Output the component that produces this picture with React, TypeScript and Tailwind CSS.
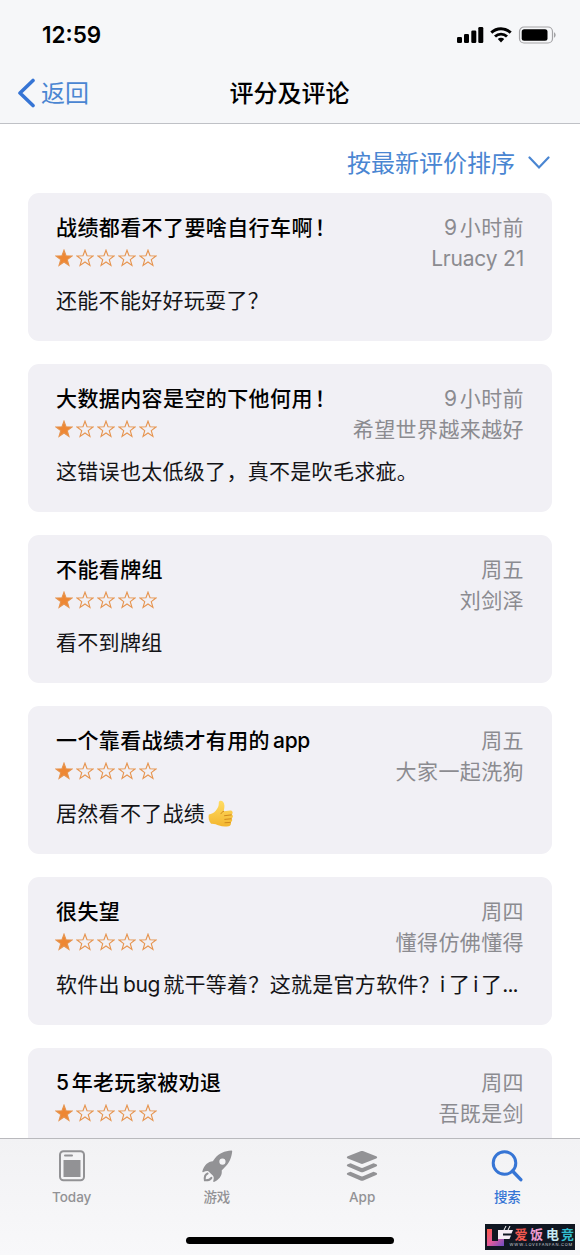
import type { ReactNode } from "react";

interface Review {
  id: number;
  title: string;
  time: string;
  author: string;
  body: string;
  thumb?: boolean;
}

const reviews: Review[] = [
  { id: 1, title: "战绩都看不了要啥自行车啊！", time: "9小时前", author: "Lruacy 21", body: "还能不能好好玩耍了？" },
  { id: 2, title: "大数据内容是空的下他何用！", time: "9小时前", author: "希望世界越来越好", body: "这错误也太低级了，真不是吹毛求疵。" },
  { id: 3, title: "不能看牌组", time: "周五", author: "刘剑泽", body: "看不到牌组" },
  { id: 4, title: "一个靠看战绩才有用的app", time: "周五", author: "大家一起洗狗", body: "居然看不了战绩", thumb: true },
  { id: 5, title: "很失望", time: "周四", author: "懂得仿佛懂得", body: "软件出bug就干等着？这就是官方软件？i了i了..." },
  { id: 6, title: "5年老玩家被劝退", time: "周四", author: "吾既是剑", body: "" },
];

const STAR =
  "M12 1.6l2.700 7.480 7.950.26-6.280 4.880 2.210 7.640L12 17.400l-6.580 4.460 2.210-7.640L1.350 9.340l7.950-.26z";

const latinGap = (prev: string, next: string) => {
  if (!prev) return "mr-[3px]";
  if (!next) return "ml-[3px]";
  return prev.endsWith("？") ? "mr-[4px]" : "mx-[3px]";
};

// Adds a little air around latin runs that sit between Chinese characters
function Mixed({ text }: { text: string }) {
  if (/^[\x20-\x7e]+$/.test(text)) {
    return <span className="tracking-[-0.2px]">{text}</span>;
  }
  const parts = text.split(/([A-Za-z0-9]+|\.{3}|！)/);
  return (
    <>
      {parts.map((part, i) => {
        if (i % 2 === 0) return part;
        if (part === "...") return <span key={i} className="tracking-[-0.9px]">{part}</span>;
        if (part === "！") return <span key={i} className="ml-0.5">{part}</span>;
        return (
          <span key={i} className={`tracking-[-0.3px] ${latinGap(parts[i - 1], parts[i + 1])}`}>
            {part}
          </span>
        );
      })}
    </>
  );
}

function Stars() {
  return (
    <div className="-ml-px flex gap-[3px] pb-0.5">
      {[0, 1, 2, 3, 4].map((n) => (
        <svg key={n} viewBox="0 0 24 24" className="size-[18px]" fill={n === 0 ? "#ee8733" : "none"} stroke="#e6944f" strokeWidth="1.500">
          <path d={STAR} />
        </svg>
      ))}
    </div>
  );
}

function ThumbsUp() {
  return (
    <svg viewBox="0 0 26 28" className="ml-[3px] h-7 w-[26px]">
      <defs>
        <linearGradient id="thumb" x1="0" y1="0" x2="0" y2="1">
          <stop offset="0" stopColor="#ffdc62" />
          <stop offset="1" stopColor="#f3b62f" />
        </linearGradient>
      </defs>
      <path
        d="M.8 14.500c2.600-.5 5.200-1.500 6.900-3.700 1.600-2 2.800-3.800 3-6 .2-1.900-.3-3.600 1.500-4 2.300-.3 4 1.900 4.200 4.600.1 2.500-.4 4.100-.7 5.900l6.600-.9c2.300-.2 3.200 2.800 1.400 3.900 1.700.9 1.500 3.400-.1 4.100 1.100 1.200.7 3.100-.8 3.700.7 1.700-.2 3.900-2.200 4.200-3.500.5-6.900.3-9.500-.7-2.500-1-4.800-2-8-1.800C.9 21.500.1 18 .8 14.500z"
        fill="url(#thumb)"
      />
      <path d="M16.500 15.700l6.800-.8M16.800 19.400l6.400-.6M17 22.700l5.300-.3M15.700 11.300c-1.500.5-2.300 1.300-2.700 2.400" fill="none" stroke="#d08a1d" strokeWidth="1" strokeLinecap="round" />
    </svg>
  );
}

function ReviewCard({ review }: { review: Review }) {
  return (
    <article className="h-[148px] shrink-0 rounded-[11px] bg-[#f1f0f5] px-7 pt-5 text-[21px] tracking-[0.4px]">
      <div className="flex h-[30px] items-center justify-between leading-[30px]">
        <h2 className="font-medium text-black">
          <Mixed text={review.title} />
        </h2>
        <span className="text-[#8b8b90]">
          <Mixed text={review.time} />
        </span>
      </div>
      <div className="flex h-[31px] items-center justify-between leading-[31px]">
        <Stars />
        <span className="text-[#8b8b90]">
          <Mixed text={review.author} />
        </span>
      </div>
      <p className="mt-3 flex h-[30px] items-center leading-[30px] tracking-[0.3px] whitespace-nowrap text-[#141417]">
        <span>
          <Mixed text={review.body} />
        </span>
        {review.thumb && <ThumbsUp />}
      </p>
    </article>
  );
}

function StatusIcons() {
  return (
    <svg viewBox="0 0 100 20" className="mt-0.5 h-5 w-[100px]">
      <rect x="0" y="11" width="5" height="6" rx="1.300" />
      <rect x="7" y="8" width="5" height="9" rx="1.300" />
      <rect x="14.300" y="4.500" width="5" height="12.500" rx="1.300" />
      <rect x="21.300" y="1" width="5" height="16" rx="1.300" />
      <g fill="none" stroke="#000" strokeWidth="2.900">
        <path d="M34.300 6.600a14 14 0 0 1 19.400 0" />
        <path d="M38 10.500a8.700 8.700 0 0 1 12 0" />
      </g>
      <path d="M44 16.400l-3.200-3.300a4.600 4.600 0 0 1 6.400 0z" />
      <rect x="62.500" y="1" width="33" height="16" rx="4.500" fill="none" stroke="#a3a3a6" strokeWidth="1.200" />
      <rect x="64.700" y="3.200" width="25.800" height="11.600" rx="2.500" />
      <path d="M97 6.300c2.200 1 2.200 4.400 0 5.400z" fill="#a3a3a6" />
    </svg>
  );
}

function Tab({ label, active, children }: { label: string; active?: boolean; children: ReactNode }) {
  return (
    <div className={`flex flex-1 flex-col items-center ${active ? "text-[#3675d5]" : "text-[#929295]"}`}>
      <svg viewBox="0 0 32 32" className="size-8" fill="currentColor">
        {children}
      </svg>
      <span className="mt-[6px] text-[13.500px] leading-[18px] font-medium">{label}</span>
    </div>
  );
}

function TabBar() {
  return (
    <nav className="relative h-[117px] shrink-0 border-t border-[#b9b9bd] bg-linear-to-b from-[#f2f2f4] to-[#f8f8fa]">
      <div className="-ml-px flex pt-[11px]">
        <Tab label="Today">
          <rect x="4" y="1.200" width="24" height="29" rx="3.500" fill="none" stroke="currentColor" strokeWidth="2" />
          <rect x="8" y="4.500" width="9" height="2" rx="1" />
          <rect x="7.500" y="10" width="17" height="17" />
        </Tab>
        <Tab label="游戏">
          <path
            fillRule="evenodd"
            d="M30.500.6C23.700 1 17.800 3.600 14 8.300l-2.200 2.900C7.200 11.500 3 15 1.300 21.500c0 .7.500 1 1.200.6 1.600-.8 3.200-1.300 4.800-.9l4.500 4.200c1.400 1.600 1 3.600.4 5.800 0 .7.600.9 1.200.5 4.800-2.500 8-6.200 7.300-11.100l2.600-2.800C28.200 13.500 30.700 7.500 31.200 1.300c0-.5-.2-.7-.7-.7zM21.500 8.600a3.100 3.100 0 1 1-.1 6.200 3.100 3.100 0 0 1 .1-6.200z"
          />
          <path d="M6.600 23.500c-3 1.200-3.100 4.200-2.700 6.800 2.700.2 5.100-.2 6.500-2.400" fill="none" stroke="currentColor" strokeWidth="2" strokeLinecap="round" />
        </Tab>
        <Tab label="App">
          <path d="M14.500 1.300c1-.4 2-.4 3 0l12.700 5c1.300.6 1.300 1.600 0 2.200l-12.700 5.100c-1 .4-2 .4-3 0L1.800 8.500C.5 7.900.5 6.900 1.800 6.300z" />
          <path d="M1.800 14.200l2.700-.9 10 4.300c1 .4 2 .4 3 0l10-4.300 2.700.9c1.300.6 1.300 1.700 0 2.300l-12.700 5.400c-1 .4-2 .4-3 0L1.800 16.500c-1.300-.6-1.300-1.700 0-2.300z" />
          <path d="M1.800 22.700l2.700-.9 10 4.300c1 .4 2 .4 3 0l10-4.300 2.700.9c1.300.6 1.300 1.700 0 2.300l-12.700 5.400c-1 .4-2 .4-3 0L1.800 25c-1.300-.6-1.300-1.700 0-2.300z" />
        </Tab>
        <Tab label="搜索" active>
          <circle cx="13.500" cy="13" r="11.300" fill="none" stroke="currentColor" strokeWidth="3" />
          <path d="M21.500 21l8.300 8.700" stroke="currentColor" strokeWidth="3.400" strokeLinecap="round" />
        </Tab>
      </div>
      <div className="absolute bottom-[11px] left-[186px] h-[7px] w-[208px] rounded-full bg-black" />
      <Watermark />
    </nav>
  );
}

function Watermark() {
  return (
    <div className="absolute right-[5px] bottom-[5px] flex h-[26px] w-[90px] bg-[#101722]">
      <svg viewBox="0 0 29 26" className="h-[26px] w-[29px] shrink-0">
        <defs>
          <linearGradient id="mark" x1="0" y1="0" x2="1" y2="1">
            <stop offset="0" stopColor="#ff5b45" />
            <stop offset=".5" stopColor="#e05a9a" />
            <stop offset="1" stopColor="#6b4bc4" />
          </linearGradient>
        </defs>
        <path d="M2 5h5v12h6v-4h6v9H2z" fill="url(#mark)" />
        <path d="M13 6h15l-1.500 3.500H18v2h8L24.500 15H13z" fill="#f5edf5" />
        <path d="M19 6l2-4M23 6l2-4" stroke="#fff" strokeWidth="1" />
      </svg>
      <div className="-ml-2 flex w-[68px] shrink-0 flex-col items-end pt-[3px]">
        <div className="flex text-[13px] leading-[15px] font-bold">
          <span className="w-[15.500px] text-[#f2584f]">爱</span>
          <span className="w-[16px] text-[#ee9bd0]">饭</span>
          <span className="w-[15px] text-[#c5e9f3]">电</span>
          <span className="w-[13px] text-[#32bdd0]">竞</span>
        </div>
        <span className="pr-px text-[4px] leading-[5px] tracking-[0.800px] whitespace-nowrap text-[#c9ccd3]">WWW.LOVEFANFAN.COM</span>
      </div>
    </div>
  );
}

export default function App() {
  return (
    <div className="flex h-[1255px] w-[580px] flex-col overflow-hidden bg-white font-[Inter,'Noto_Sans_CJK_SC',sans-serif]">
      <header className="h-[124px] shrink-0 border-b border-[#bfc1c6] bg-[#f6f7f9]">
        <div className="flex h-[70px] items-center justify-between pr-[23px] pl-[42px]">
          <span className="text-[22.500px] font-semibold">12:59</span>
          <StatusIcons />
        </div>
        <div className="grid h-12 grid-cols-3 items-center text-2xl">
          <div className="flex items-center pl-[17px] text-[#4a86d2]">
            <svg viewBox="0 0 18 30" className="mr-1.5 mb-0.5 h-[30px] w-[18px]" fill="none" stroke="#3675d5" strokeWidth="3.600" strokeLinecap="round" strokeLinejoin="round">
              <path d="M16 2.500L3 15l13 12.500" />
            </svg>
            <span>返回</span>
          </div>
          <h1 className="-ml-px text-center font-medium text-black">评分及评论</h1>
        </div>
      </header>

      <main className="flex min-h-0 flex-1 flex-col overflow-hidden px-7">
        <div className="flex h-[69px] shrink-0 items-center justify-end pt-2.5 text-2xl text-[#4a86d2]">
          <span>按最新评价排序</span>
          <svg viewBox="0 0 22 14" className="mr-0.5 mb-0.5 ml-[13px] h-3.5 w-[22px]" fill="none" stroke="currentColor" strokeWidth="2.200" strokeLinecap="round">
            <path d="M1.500 1.500L11 11.500l9.500-10" />
          </svg>
        </div>
        <div className="flex flex-col gap-[23px]">
          {reviews.map((review) => (
            <ReviewCard key={review.id} review={review} />
          ))}
        </div>
      </main>

      <TabBar />
    </div>
  );
}
